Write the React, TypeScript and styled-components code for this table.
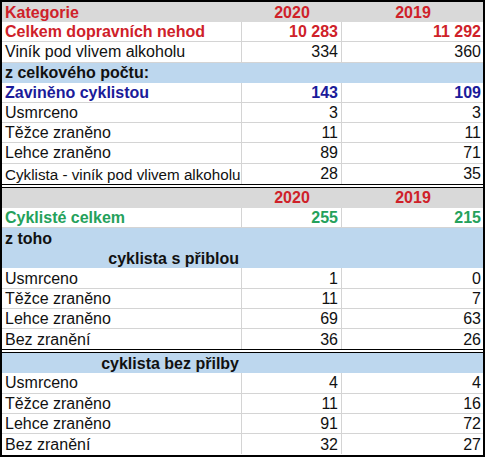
import React from 'react'
import styled, { createGlobalStyle } from 'styled-components'

const GlobalStyle = createGlobalStyle`
  body {
    margin: 0;
    background: #fff;
    font-family: "Liberation Sans", Arial, sans-serif;
  }
`

type Tone = 'white' | 'gray' | 'blue'
type Ink = 'black' | 'red' | 'navy' | 'green'

const inks: Record<Ink, string> = {
  black: '#111',
  red: '#cf2129',
  navy: '#1b1b9a',
  green: '#25a15b',
}

const fills: Record<Tone, string> = {
  white: '#fff',
  gray: '#d9d9d9',
  blue: '#bdd7ee',
}

const Sheet = styled.div`
  width: 485px;
  height: 457px;
  box-sizing: border-box;
  border: 2px solid #000;
  overflow: hidden;
`

const Section = styled.div<{ first?: boolean }>`
  border-top: ${p => (p.first ? 'none' : '4px double #000')};
`

const Row = styled.div<{ tone: Tone; last?: boolean }>`
  display: grid;
  grid-template-columns: 240px 100px 1fr;
  height: 20.2px;
  box-sizing: border-box;
  background: ${p => fills[p.tone]};
  border-bottom: ${p => (p.tone === 'white' && !p.last ? '1px solid #d4d4d4' : 'none')};
`

const Cell = styled.div<{ tone: Tone; align?: 'left' | 'center' | 'right'; bold?: boolean; ink?: Ink; small?: boolean; edge?: boolean }>`
  display: flex;
  align-items: center;
  justify-content: ${p => (p.align === 'right' ? 'flex-end' : p.align === 'center' ? 'center' : 'flex-start')};
  padding: 1px 3px 0;
  box-sizing: border-box;
  white-space: nowrap;
  overflow: hidden;
  font-size: ${p => (p.small ? '15.2px' : '16px')};
  font-weight: ${p => (p.bold ? 700 : 400)};
  color: ${p => inks[p.ink ?? 'black']};
  border-right: ${p => (p.tone === 'white' && !p.edge ? '1px solid #d4d4d4' : 'none')};
  padding-right: ${p => (p.edge ? '2px' : '3px')};
`

interface Line {
  tone: Tone
  label?: string
  a?: string
  b?: string
  ink?: Ink
  bold?: boolean
  labelRight?: boolean
  small?: boolean
  years?: boolean
}

const sections: Line[][] = [
  [
    { tone: 'gray', label: 'Kategorie', a: '2020', b: '2019', ink: 'red', bold: true, years: true },
    { tone: 'white', label: 'Celkem dopravních nehod', a: '10 283', b: '11 292', ink: 'red', bold: true },
    { tone: 'white', label: 'Viník pod vlivem alkoholu', a: '334', b: '360' },
    { tone: 'blue', label: 'z celkového počtu:', bold: true },
    { tone: 'white', label: 'Zaviněno cyklistou', a: '143', b: '109', ink: 'navy', bold: true },
    { tone: 'white', label: 'Usmrceno', a: '3', b: '3' },
    { tone: 'white', label: 'Těžce zraněno', a: '11', b: '11' },
    { tone: 'white', label: 'Lehce zraněno', a: '89', b: '71' },
    { tone: 'white', label: 'Cyklista - viník pod vlivem alkoholu', a: '28', b: '35', small: true },
  ],
  [
    { tone: 'gray', a: '2020', b: '2019', ink: 'red', bold: true, years: true },
    { tone: 'white', label: 'Cyklisté celkem', a: '255', b: '215', ink: 'green', bold: true },
    { tone: 'blue', label: 'z toho', bold: true },
    { tone: 'blue', label: 'cyklista s přiblou', bold: true, labelRight: true },
    { tone: 'white', label: 'Usmrceno', a: '1', b: '0' },
    { tone: 'white', label: 'Těžce zraněno', a: '11', b: '7' },
    { tone: 'white', label: 'Lehce zraněno', a: '69', b: '63' },
    { tone: 'white', label: 'Bez zranění', a: '36', b: '26' },
  ],
  [
    { tone: 'blue', label: 'cyklista bez přilby', bold: true, labelRight: true },
    { tone: 'white', label: 'Usmrceno', a: '4', b: '4' },
    { tone: 'white', label: 'Těžce zraněno', a: '11', b: '16' },
    { tone: 'white', label: 'Lehce zraněno', a: '91', b: '72' },
    { tone: 'white', label: 'Bez zranění', a: '32', b: '27' },
  ],
]

export default function App() {
  return (
    <>
      <GlobalStyle />
      <Sheet>
        {sections.map((lines, si) => (
          <Section key={si} first={si === 0}>
            {lines.map((l, i) => {
              const numAlign = l.years ? 'center' : 'right'
              return (
                <Row key={i} tone={l.tone} last={i === lines.length - 1}>
                  <Cell tone={l.tone} align={l.labelRight ? 'right' : 'left'} bold={l.bold} ink={l.ink} small={l.small}>
                    {l.label}
                  </Cell>
                  <Cell tone={l.tone} align={numAlign} bold={l.bold} ink={l.ink}>
                    {l.a}
                  </Cell>
                  <Cell tone={l.tone} align={numAlign} bold={l.bold} ink={l.ink} edge>
                    {l.b}
                  </Cell>
                </Row>
              )
            })}
          </Section>
        ))}
      </Sheet>
    </>
  )
}
